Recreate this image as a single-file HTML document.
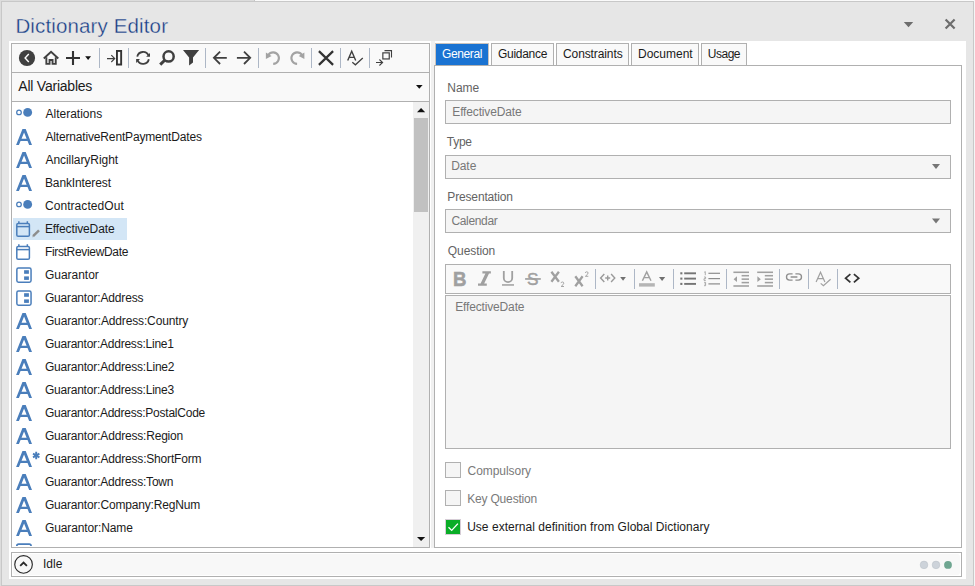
<!DOCTYPE html>
<html>
<head>
<meta charset="utf-8">
<title>Dictionary Editor</title>
<style>
*{box-sizing:border-box;margin:0;padding:0}
html,body{width:975px;height:586px;overflow:hidden}
body{background:#e6e6e6;font-family:"Liberation Sans",sans-serif;font-size:12px;color:#1b1b1b;position:relative}
.abs{position:absolute}
.tx{position:absolute;white-space:pre}
.tab{position:absolute;top:43px;height:23px;border:1px solid #b0b0b0;border-bottom:none;background:#f9f9f9}
.tab.sel{background:#1a73d2;border-color:#c9c3bd;height:22px}
.inp{position:absolute;left:445px;width:506px;height:24px;border:1px solid #b0b0b0;background:#f5f5f5}
.cb{position:absolute;left:445px;width:16px;height:16px;border:1px solid #b0b0b0;background:#f5f5f5}
svg{position:absolute;left:0;top:0}
</style>
</head>
<body>
<!-- window frame -->
<div class="abs" style="left:0;top:0;width:975px;height:1px;background:#fafafa"></div>
<div class="abs" style="left:0;top:0;width:254px;height:1px;background:#dcdcdc"></div>
<div class="abs" style="left:254px;top:0;width:1px;height:1px;background:#c6c6c6"></div>
<div class="abs" style="left:0;top:0;width:1px;height:586px;background:#dcdcdc"></div>
<div class="abs" style="left:974px;top:0;width:1px;height:586px;background:#f5f5f5"></div>
<div class="abs" style="left:1px;top:1px;width:973px;height:585px;border:1px solid #c8c8c8;"></div>
<!-- white content -->
<div class="abs" style="left:9px;top:41px;width:957px;height:538px;background:#fff"></div>
<!-- left panel -->
<div class="abs" style="left:11px;top:43px;width:419px;height:505px;border:1px solid #b0b0b0;background:#fff"></div>
<div class="abs" style="left:12px;top:44px;width:417px;height:29px;background:#f9f9f9;border-bottom:1px solid #b0b0b0"></div>
<div class="abs" style="left:12px;top:73px;width:417px;height:29px;background:#f9f9f9;border-bottom:1px solid #b0b0b0"></div>
<div class="abs" style="left:413px;top:102px;width:16px;height:445px;background:#f0f0f0"></div>
<div class="abs" style="left:414px;top:118px;width:14px;height:94px;background:#c1c1c1"></div>
<div class="abs" style="left:13px;top:218px;width:114px;height:22px;background:#d3e6f6"></div>
<!-- splitter -->
<div class="abs" style="left:431px;top:41px;width:4px;height:507px;background:#f0f0f0"></div>
<!-- right panel -->
<div class="tab sel" style="left:435px;width:54px"></div>
<div class="tab" style="left:491px;width:63px"></div>
<div class="tab" style="left:556px;width:73px"></div>
<div class="tab" style="left:631px;width:68px"></div>
<div class="tab" style="left:701px;width:46px"></div>
<div class="abs" style="left:434px;top:65px;width:528px;height:483px;border:1px solid #b0b0b0;background:#fff"></div>
<div class="inp" style="top:100px"></div>
<div class="inp" style="top:155px"></div>
<div class="inp" style="top:209px"></div>
<div class="abs" style="left:445px;top:264px;width:506px;height:30px;border:1px solid #b0b0b0;background:#f9f9f9"></div>
<div class="abs" style="left:445px;top:295px;width:506px;height:154px;border:1px solid #b0b0b0;background:#f5f5f5"></div>
<div class="cb" style="top:462px"></div>
<div class="cb" style="top:490px"></div>
<div class="cb" style="top:519px;background:#0aad27;border-color:#d6cdd6"></div>
<!-- rich text glyph buttons -->
<div class="tx" style="left:453px;top:266.5px;font-size:20px;line-height:24px;font-weight:bold;color:#a0a0a0;-webkit-text-stroke:0.55px #a0a0a0;transform-origin:0 0;transform:scaleX(0.93)">B</div>
<div class="tx" style="left:527.0px;top:267.5px;font-size:17.2px;line-height:22px;color:#a0a0a0;-webkit-text-stroke:0.45px #a0a0a0">S</div>
<!-- status bar -->
<div class="abs" style="left:11px;top:552px;width:951px;height:25px;border:1px solid #b0b0b0;background:#fff"></div>
<div class="abs" style="left:13px;top:554px;width:947px;height:21px;border-radius:3px;background:#f8f8f8"></div>
<div class="tx" id="t0" style="left:15.39px;top:11px;font-size:20.5px;line-height:29px;color:#143a84;letter-spacing:0.138px;-webkit-text-stroke:0.32px #e6e6e6;">Dictionary Editor</div>
<div class="tx" id="t1" style="left:18.34px;top:76px;font-size:14px;line-height:20px;color:#1b1b1b;letter-spacing:-0.231px;">All Variables</div>
<div class="tx" id="t2" style="left:45.48px;top:106px;font-size:12px;line-height:17px;color:#1b1b1b;letter-spacing:-0.001px;">Alterations</div>
<div class="tx" id="t3" style="left:45.48px;top:129px;font-size:12px;line-height:17px;color:#1b1b1b;letter-spacing:-0.163px;">AlternativeRentPaymentDates</div>
<div class="tx" id="t4" style="left:45.48px;top:152px;font-size:12px;line-height:17px;color:#1b1b1b;letter-spacing:-0.056px;">AncillaryRight</div>
<div class="tx" id="t5" style="left:44.94px;top:175px;font-size:12px;line-height:17px;color:#1b1b1b;letter-spacing:-0.120px;">BankInterest</div>
<div class="tx" id="t6" style="left:44.93px;top:198px;font-size:12px;line-height:17px;color:#1b1b1b;letter-spacing:0.070px;">ContractedOut</div>
<div class="tx" id="t7" style="left:44.94px;top:221px;font-size:12px;line-height:17px;color:#1b1b1b;letter-spacing:-0.128px;">EffectiveDate</div>
<div class="tx" id="t8" style="left:44.94px;top:244px;font-size:12px;line-height:17px;color:#1b1b1b;letter-spacing:-0.329px;">FirstReviewDate</div>
<div class="tx" id="t9" style="left:44.91px;top:267px;font-size:12px;line-height:17px;color:#1b1b1b;letter-spacing:-0.014px;">Guarantor</div>
<div class="tx" id="t10" style="left:44.91px;top:290px;font-size:12px;line-height:17px;color:#1b1b1b;letter-spacing:-0.177px;">Guarantor:Address</div>
<div class="tx" id="t11" style="left:44.91px;top:313px;font-size:12px;line-height:17px;color:#1b1b1b;letter-spacing:-0.139px;">Guarantor:Address:Country</div>
<div class="tx" id="t12" style="left:44.91px;top:336px;font-size:12px;line-height:17px;color:#1b1b1b;letter-spacing:-0.228px;">Guarantor:Address:Line1</div>
<div class="tx" id="t13" style="left:44.91px;top:359px;font-size:12px;line-height:17px;color:#1b1b1b;letter-spacing:-0.204px;">Guarantor:Address:Line2</div>
<div class="tx" id="t14" style="left:44.91px;top:382px;font-size:12px;line-height:17px;color:#1b1b1b;letter-spacing:-0.218px;">Guarantor:Address:Line3</div>
<div class="tx" id="t15" style="left:44.91px;top:405px;font-size:12px;line-height:17px;color:#1b1b1b;letter-spacing:-0.238px;">Guarantor:Address:PostalCode</div>
<div class="tx" id="t16" style="left:44.91px;top:428px;font-size:12px;line-height:17px;color:#1b1b1b;letter-spacing:-0.192px;">Guarantor:Address:Region</div>
<div class="tx" id="t17" style="left:44.91px;top:451px;font-size:12px;line-height:17px;color:#1b1b1b;letter-spacing:-0.186px;">Guarantor:Address:ShortForm</div>
<div class="tx" id="t18" style="left:44.91px;top:474px;font-size:12px;line-height:17px;color:#1b1b1b;letter-spacing:-0.197px;">Guarantor:Address:Town</div>
<div class="tx" id="t19" style="left:44.91px;top:497px;font-size:12px;line-height:17px;color:#1b1b1b;letter-spacing:-0.180px;">Guarantor:Company:RegNum</div>
<div class="tx" id="t20" style="left:44.91px;top:520px;font-size:12px;line-height:17px;color:#1b1b1b;letter-spacing:-0.112px;">Guarantor:Name</div>
<div class="tx" id="t21" style="left:441.97px;top:46px;font-size:12px;line-height:17px;color:#ffffff;letter-spacing:-0.363px;">General</div>
<div class="tx" id="t22" style="left:498.07px;top:46px;font-size:12px;line-height:17px;color:#1b1b1b;letter-spacing:-0.293px;">Guidance</div>
<div class="tx" id="t23" style="left:563.00px;top:46px;font-size:12px;line-height:17px;color:#1b1b1b;letter-spacing:-0.105px;">Constraints</div>
<div class="tx" id="t24" style="left:638.05px;top:46px;font-size:12px;line-height:17px;color:#1b1b1b;letter-spacing:-0.013px;">Document</div>
<div class="tx" id="t25" style="left:707.83px;top:46px;font-size:12px;line-height:17px;color:#1b1b1b;letter-spacing:-0.496px;">Usage</div>
<div class="tx" id="t26" style="left:447.32px;top:80px;font-size:12px;line-height:17px;color:#636363;letter-spacing:-0.016px;">Name</div>
<div class="tx" id="t27" style="left:452.32px;top:104px;font-size:12px;line-height:17px;color:#787878;letter-spacing:-0.156px;">EffectiveDate</div>
<div class="tx" id="t28" style="left:446.80px;top:134px;font-size:12px;line-height:17px;color:#636363;letter-spacing:-0.264px;">Type</div>
<div class="tx" id="t29" style="left:451.16px;top:158px;font-size:12px;line-height:17px;color:#787878;letter-spacing:-0.064px;">Date</div>
<div class="tx" id="t30" style="left:447.32px;top:189px;font-size:12px;line-height:17px;color:#636363;letter-spacing:-0.154px;">Presentation</div>
<div class="tx" id="t31" style="left:451.39px;top:213px;font-size:12px;line-height:17px;color:#787878;letter-spacing:-0.328px;">Calendar</div>
<div class="tx" id="t32" style="left:447.83px;top:243px;font-size:12px;line-height:17px;color:#636363;letter-spacing:-0.087px;">Question</div>
<div class="tx" id="t33" style="left:455.16px;top:299px;font-size:12px;line-height:17px;color:#787878;letter-spacing:-0.152px;">EffectiveDate</div>
<div class="tx" id="t34" style="left:467.54px;top:463px;font-size:12px;line-height:17px;color:#7a7a7a;letter-spacing:-0.049px;">Compulsory</div>
<div class="tx" id="t35" style="left:467.13px;top:491px;font-size:12px;line-height:17px;color:#7a7a7a;letter-spacing:-0.170px;">Key Question</div>
<div class="tx" id="t36" style="left:467.14px;top:519px;font-size:12px;line-height:17px;color:#1b1b1b;letter-spacing:0.036px;">Use external definition from Global Dictionary</div>
<div class="tx" id="t37" style="left:42.90px;top:556px;font-size:12px;line-height:17px;color:#1b1b1b;letter-spacing:0.057px;">Idle</div>
<svg width="975" height="586" viewBox="0 0 975 586">
<defs><clipPath id="lc"><rect x="12" y="102" width="401" height="444"/></clipPath></defs>
<g clip-path="url(#lc)">
<circle cx="19" cy="112.40" r="2.3" fill="none" stroke="#4a7ebb" stroke-width="1.25"/>
<circle cx="27.65" cy="112.40" r="4.45" fill="#4a7ebb"/>
<path fill="#4a7ebb" fill-rule="evenodd" d="M16.1,145.00 L22.45,129.00 L25.7,129.00 L32.0,145.00 L29.15,145.00 L27.55,140.90 L20.55,140.90 L18.95,145.00 Z M21.55,138.80 L26.6,138.80 L24.07,132.60 Z"/>
<path fill="#4a7ebb" fill-rule="evenodd" d="M16.1,168.00 L22.45,152.00 L25.7,152.00 L32.0,168.00 L29.15,168.00 L27.55,163.90 L20.55,163.90 L18.95,168.00 Z M21.55,161.80 L26.6,161.80 L24.07,155.60 Z"/>
<path fill="#4a7ebb" fill-rule="evenodd" d="M16.1,191.00 L22.45,175.00 L25.7,175.00 L32.0,191.00 L29.15,191.00 L27.55,186.90 L20.55,186.90 L18.95,191.00 Z M21.55,184.80 L26.6,184.80 L24.07,178.60 Z"/>
<circle cx="19" cy="204.40" r="2.3" fill="none" stroke="#4a7ebb" stroke-width="1.25"/>
<circle cx="27.65" cy="204.40" r="4.45" fill="#4a7ebb"/>
<g fill="none" stroke="#4a7ebb" stroke-width="1.5"><rect x="16.8" y="223.45" width="12.6" height="12.9" rx="1.4"/><path d="M16.8,226.60 H29.4"/><path d="M18.85,221.30 V223.40 M27.35,221.30 V223.40" stroke-width="1.5"/></g>
<path d="M33.1,236.20 L39.0,230.30" stroke="#8d8d8d" stroke-width="2.4"/>
<path d="M32.3,237.20 L33.6,236.90 L32.9,235.90 Z" fill="#8a8a8a"/>
<g fill="none" stroke="#4a7ebb" stroke-width="1.5"><rect x="16.8" y="246.45" width="12.6" height="12.9" rx="1.4"/><path d="M16.8,249.60 H29.4"/><path d="M18.85,244.30 V246.40 M27.35,244.30 V246.40" stroke-width="1.5"/></g>
<rect x="16.85" y="268.05" width="14.2" height="14.1" rx="1.6" fill="none" stroke="#4a7ebb" stroke-width="1.5"/>
<rect x="24.1" y="270.20" width="4.8" height="3.6" fill="#4a7ebb"/><rect x="24.1" y="276.40" width="4.8" height="3.5" fill="#4a7ebb"/>
<rect x="16.85" y="291.05" width="14.2" height="14.1" rx="1.6" fill="none" stroke="#4a7ebb" stroke-width="1.5"/>
<rect x="24.1" y="293.20" width="4.8" height="3.6" fill="#4a7ebb"/><rect x="24.1" y="299.40" width="4.8" height="3.5" fill="#4a7ebb"/>
<path fill="#4a7ebb" fill-rule="evenodd" d="M16.1,329.00 L22.45,313.00 L25.7,313.00 L32.0,329.00 L29.15,329.00 L27.55,324.90 L20.55,324.90 L18.95,329.00 Z M21.55,322.80 L26.6,322.80 L24.07,316.60 Z"/>
<path fill="#4a7ebb" fill-rule="evenodd" d="M16.1,352.00 L22.45,336.00 L25.7,336.00 L32.0,352.00 L29.15,352.00 L27.55,347.90 L20.55,347.90 L18.95,352.00 Z M21.55,345.80 L26.6,345.80 L24.07,339.60 Z"/>
<path fill="#4a7ebb" fill-rule="evenodd" d="M16.1,375.00 L22.45,359.00 L25.7,359.00 L32.0,375.00 L29.15,375.00 L27.55,370.90 L20.55,370.90 L18.95,375.00 Z M21.55,368.80 L26.6,368.80 L24.07,362.60 Z"/>
<path fill="#4a7ebb" fill-rule="evenodd" d="M16.1,398.00 L22.45,382.00 L25.7,382.00 L32.0,398.00 L29.15,398.00 L27.55,393.90 L20.55,393.90 L18.95,398.00 Z M21.55,391.80 L26.6,391.80 L24.07,385.60 Z"/>
<path fill="#4a7ebb" fill-rule="evenodd" d="M16.1,421.00 L22.45,405.00 L25.7,405.00 L32.0,421.00 L29.15,421.00 L27.55,416.90 L20.55,416.90 L18.95,421.00 Z M21.55,414.80 L26.6,414.80 L24.07,408.60 Z"/>
<path fill="#4a7ebb" fill-rule="evenodd" d="M16.1,444.00 L22.45,428.00 L25.7,428.00 L32.0,444.00 L29.15,444.00 L27.55,439.90 L20.55,439.90 L18.95,444.00 Z M21.55,437.80 L26.6,437.80 L24.07,431.60 Z"/>
<path fill="#4a7ebb" fill-rule="evenodd" d="M16.1,467.00 L22.45,451.00 L25.7,451.00 L32.0,467.00 L29.15,467.00 L27.55,462.90 L20.55,462.90 L18.95,467.00 Z M21.55,460.80 L26.6,460.80 L24.07,454.60 Z"/>
<path d="M36.20,451.80 L36.20,459.20 M33.00,453.65 L39.40,457.35 M39.40,453.65 L33.00,457.35 " stroke="#4a7ebb" stroke-width="1.9" fill="none"/>
<path fill="#4a7ebb" fill-rule="evenodd" d="M16.1,490.00 L22.45,474.00 L25.7,474.00 L32.0,490.00 L29.15,490.00 L27.55,485.90 L20.55,485.90 L18.95,490.00 Z M21.55,483.80 L26.6,483.80 L24.07,477.60 Z"/>
<path fill="#4a7ebb" fill-rule="evenodd" d="M16.1,513.00 L22.45,497.00 L25.7,497.00 L32.0,513.00 L29.15,513.00 L27.55,508.90 L20.55,508.90 L18.95,513.00 Z M21.55,506.80 L26.6,506.80 L24.07,500.60 Z"/>
<path fill="#4a7ebb" fill-rule="evenodd" d="M16.1,536.00 L22.45,520.00 L25.7,520.00 L32.0,536.00 L29.15,536.00 L27.55,531.90 L20.55,531.90 L18.95,536.00 Z M21.55,529.80 L26.6,529.80 L24.07,523.60 Z"/>
<rect x="16.85" y="544.05" width="14.2" height="14.1" rx="1.8" fill="none" stroke="#4a7ebb" stroke-width="1.7"/>
</g>
<circle cx="27" cy="58" r="8.1" fill="#404040"/><path d="M28.8,54.1 L25.1,58.05 L28.8,62.0" fill="none" stroke="#fff" stroke-width="1.4"/>
<path d="M43.8,58.5 L51.05,51.7 L58.3,58.5" fill="none" stroke="#404040" stroke-width="1.9"/><path d="M46.35,57.3 V63.85 H49.55 V60.0 H52.55 V63.85 H55.75 V57.3" fill="none" stroke="#404040" stroke-width="1.9"/>
<path d="M66,58 H80 M73,51 V65" stroke="#333" stroke-width="2.1" fill="none"/>
<path d="M85.2,56.2 H91 L88.1,59.9 Z" fill="#111"/>
<rect x="99" y="48" width="1" height="20" fill="#adb7c6"/>
<rect x="128" y="48" width="1" height="20" fill="#adb7c6"/>
<rect x="205" y="48" width="1" height="20" fill="#adb7c6"/>
<rect x="258" y="48" width="1" height="20" fill="#adb7c6"/>
<rect x="311" y="48" width="1" height="20" fill="#adb7c6"/>
<rect x="340" y="48" width="1" height="20" fill="#adb7c6"/>
<rect x="369" y="48" width="1" height="20" fill="#adb7c6"/>
<path d="M107,58.6 H114.4 M111.3,55.2 L114.7,58.6 L111.3,62" fill="none" stroke="#404040" stroke-width="1.15"/><rect x="116.95" y="50.95" width="4.2" height="13.6" fill="none" stroke="#333" stroke-width="1.9"/>
<path d="M137.25,56.6 A5.95,5.95 0 0 1 148.5,55.5" fill="none" stroke="#404040" stroke-width="1.85"/><path d="M150,52.9 V56.8 H146.1 Z" fill="#404040"/>
<path d="M148.85,59.2 A5.95,5.95 0 0 1 137.6,60.3" fill="none" stroke="#404040" stroke-width="1.85"/><path d="M136.1,62.9 V59.0 H140.0 Z" fill="#404040"/>
<circle cx="168.6" cy="56.4" r="5.1" fill="none" stroke="#404040" stroke-width="2.5"/><path d="M165.0,60.0 L160.2,64.6" stroke="#404040" stroke-width="3.0" fill="none"/>
<path d="M183,50.1 H199.1 L193.0,57.4 V62.4 L189.1,65.6 V57.4 Z" fill="#404040"/>
<path d="M214.2,57.8 H226.8 M220.1,51.6 L213.9,57.8 L220.1,64.0" fill="none" stroke="#404040" stroke-width="1.8"/>
<path d="M236.9,57.8 H249.9 M244.0,51.6 L250.2,57.8 L244.0,64.0" fill="none" stroke="#404040" stroke-width="1.8"/>
<path d="M268.3,55.0 A5.75,5.75 0 1 1 273.2,63.85" fill="none" stroke="#a3a3a3" stroke-width="2.1"/><path d="M265.9,52.6 V59.0 L271.6,55.9 Z" fill="#a3a3a3"/>
<path d="M302.0,55.0 A5.75,5.75 0 1 0 297.1,63.85" fill="none" stroke="#a3a3a3" stroke-width="2.1"/><path d="M304.4,52.6 V59.0 L298.7,55.9 Z" fill="#a3a3a3"/>
<path d="M318.9,51.1 L333.1,64.9 M333.1,51.1 L318.9,64.9" stroke="#333" stroke-width="2.2" fill="none"/>
<path d="M347.7,60.5 L351.7,51.3 L355.7,60.5 M349.2,57.4 H354.2" fill="none" stroke="#404040" stroke-width="1.4"/><path d="M352.3,62.2 L355.4,64.8 L362.8,58.0" fill="none" stroke="#404040" stroke-width="1.25"/>
<path d="M376,62.5 H382.4 M379.4,59.5 L382.6,62.5 L379.4,65.5" fill="none" stroke="#404040" stroke-width="1.1"/><rect x="382.85" y="52.85" width="6.4" height="6.1" fill="none" stroke="#404040" stroke-width="1.2"/><path d="M384.5,50.6 H391.5 V57.6" fill="none" stroke="#404040" stroke-width="1.1"/>
<path d="M416,85 H422.6 L419.3,88.8 Z" fill="#111"/>
<path d="M903.8,22 H913.2 L908.5,27.3 Z" fill="#6d6d6d"/>
<path d="M945.6,19.5 L954.6,28.6 M954.6,19.5 L945.6,28.6" stroke="#6d6d6d" stroke-width="2.2" fill="none"/>
<path d="M417,112.2 H425.2 L421.1,108 Z" fill="#111"/>
<path d="M417,536.9 H425.2 L421.1,541.1 Z" fill="#111"/>
<path d="M932,164.0 H940 L936,169.0 Z" fill="#767676"/>
<path d="M932,218.5 H940 L936,223.5 Z" fill="#767676"/>
<rect x="595" y="269" width="1" height="20" fill="#adb7c6"/>
<rect x="634" y="269" width="1" height="20" fill="#adb7c6"/>
<rect x="673" y="269" width="1" height="20" fill="#adb7c6"/>
<rect x="726" y="269" width="1" height="20" fill="#adb7c6"/>
<rect x="779" y="269" width="1" height="20" fill="#adb7c6"/>
<rect x="808" y="269" width="1" height="20" fill="#adb7c6"/>
<rect x="837" y="269" width="1" height="20" fill="#adb7c6"/>
<path d="M503.8,271 V277.9 A4.2,4.2 0 0 0 512.2,277.9 V271" fill="none" stroke="#a0a0a0" stroke-width="1.8"/><rect x="502" y="284.2" width="12" height="1.5" fill="#a0a0a0"/>
<path d="M482.4,271.3 H490.9 V273.4 H489.0 L484.2,283.5 H486.8 V285.7 H478.0 V283.5 H480.6 L485.4,273.4 H482.4 Z" fill="#a0a0a0"/>
<path d="M551.4,271.7 L558.9,281.7 M558.9,271.7 L551.4,281.7" fill="none" stroke="#a0a0a0" stroke-width="2.3"/>
<path d="M575.3,276.3 L582.6,286.3 M582.6,276.3 L575.3,286.3" fill="none" stroke="#a0a0a0" stroke-width="2.3"/>
<path transform="translate(560.9,281.9)" d="M0.1,1.2 Q0.3,0.1 1.5,0.1 Q2.9,0.1 2.9,1.3 Q2.9,2.4 0.2,4.6 H3.1" fill="none" stroke="#a0a0a0" stroke-width="0.95"/>
<path transform="translate(585.2,271.7)" d="M0.1,1.2 Q0.3,0.1 1.5,0.1 Q2.9,0.1 2.9,1.3 Q2.9,2.4 0.2,4.6 H3.1" fill="none" stroke="#a0a0a0" stroke-width="0.95"/>
<rect x="525.1" y="278.1" width="15.7" height="1.7" fill="#a0a0a0"/>
<path d="M604.3,274 L600.6,278 L604.3,282 M611.1,274 L614.8,278 L611.1,282 M605.2,278 H610.2 M607.7,275.5 V280.5" fill="none" stroke="#9a9a9a" stroke-width="1.4"/>
<path d="M620.2,277 H625.9 L623.05,280.7 Z" fill="#707070"/>
<path d="M642.4,280.7 L646.7,271.9 L651.0,280.7 M644.0,277.6 H649.4" fill="none" stroke="#a0a0a0" stroke-width="1.45"/><rect x="639" y="283.2" width="15.8" height="3.4" fill="#b5b5b5"/>
<path d="M659,277 H665.2 L662.1,281 Z" fill="#707070"/>
<rect x="684.2" y="272.35" width="11.8" height="1.9" fill="#757575"/><rect x="680.3" y="272.25" width="2.1" height="2.1" fill="#757575"/>
<rect x="684.2" y="277.65" width="11.8" height="1.9" fill="#757575"/><rect x="680.3" y="277.55" width="2.1" height="2.1" fill="#757575"/>
<rect x="684.2" y="282.95" width="11.8" height="1.9" fill="#757575"/><rect x="680.3" y="282.85" width="2.1" height="2.1" fill="#757575"/>
<rect x="708.4" y="272.70" width="11.6" height="1.2" fill="#8c8c8c"/>
<path d="M704.2,272.30 L705.3,271.60 V275.20" fill="none" stroke="#9a9a9a" stroke-width="0.8"/>
<rect x="708.4" y="278.00" width="11.6" height="1.2" fill="#8c8c8c"/>
<path d="M704.0,277.00 H705.6 V278.70 H704.0 V280.40 H705.8" fill="none" stroke="#9a9a9a" stroke-width="0.8"/>
<rect x="708.4" y="283.30" width="11.6" height="1.2" fill="#8c8c8c"/>
<path d="M704.0,282.30 H705.6 V285.70 H704.0 M704.4,284.00 H705.6" fill="none" stroke="#9a9a9a" stroke-width="0.8"/>
<rect x="733.4" y="271.52" width="15.6" height="1.55" fill="#a0a0a0"/>
<rect x="733.4" y="285.22" width="15.6" height="1.55" fill="#a0a0a0"/>
<rect x="741.6" y="274.92" width="7.4" height="1.55" fill="#a0a0a0"/>
<rect x="741.6" y="278.37" width="7.4" height="1.55" fill="#a0a0a0"/>
<rect x="741.6" y="281.82" width="7.4" height="1.55" fill="#a0a0a0"/>
<path d="M737,276.3 V282 L733.6,279.15 Z" fill="#a0a0a0"/>
<rect x="757.2" y="271.52" width="15.8" height="1.55" fill="#a0a0a0"/>
<rect x="757.2" y="285.22" width="15.8" height="1.55" fill="#a0a0a0"/>
<rect x="764.8" y="274.92" width="8.2" height="1.55" fill="#a0a0a0"/>
<rect x="764.8" y="278.37" width="8.2" height="1.55" fill="#a0a0a0"/>
<rect x="764.8" y="281.82" width="8.2" height="1.55" fill="#a0a0a0"/>
<path d="M757.4,276.3 V282 L760.8,279.15 Z" fill="#a0a0a0"/>
<path d="M792.6,273.9 H789.6 A3.1,3.1 0 0 0 789.6,280.1 H792.6 M795.4,273.9 H798.4 A3.1,3.1 0 0 1 798.4,280.1 H795.4 M790.6,277 H797.4" fill="none" stroke="#8f8f8f" stroke-width="1.35"/>
<path d="M816.1,282 L820.5,272.2 L824.9,282 M817.8,278.7 H823.2" fill="none" stroke="#a0a0a0" stroke-width="1.2"/><path d="M820.7,283.4 L823.4,285.7 L830.6,279.2" fill="none" stroke="#a0a0a0" stroke-width="1.2"/>
<path d="M850.4,274.1 L845.6,278.2 L850.4,282.3 M853.9,274.1 L858.7,278.2 L853.9,282.3" fill="none" stroke="#333" stroke-width="1.75"/>
<circle cx="23.55" cy="564.4" r="8.8" fill="none" stroke="#2a2a2a" stroke-width="1.15"/><path d="M20.2,565.9 L23.55,562.5 L26.9,565.9" fill="none" stroke="#2a2a2a" stroke-width="1.8"/>
<circle cx="924" cy="564.9" r="3.8" fill="#cdd3da" stroke="#bcc2c9" stroke-width="0.6"/><circle cx="936" cy="564.9" r="3.8" fill="#cdd3da" stroke="#bcc2c9" stroke-width="0.6"/><circle cx="948" cy="564.9" r="3.9" fill="#6fa691"/>
<path d="M448.5,527.3 L451.7,530.4 L457.9,523.6" fill="none" stroke="#fff" stroke-width="1.35"/>
</svg>
</body>
</html>
